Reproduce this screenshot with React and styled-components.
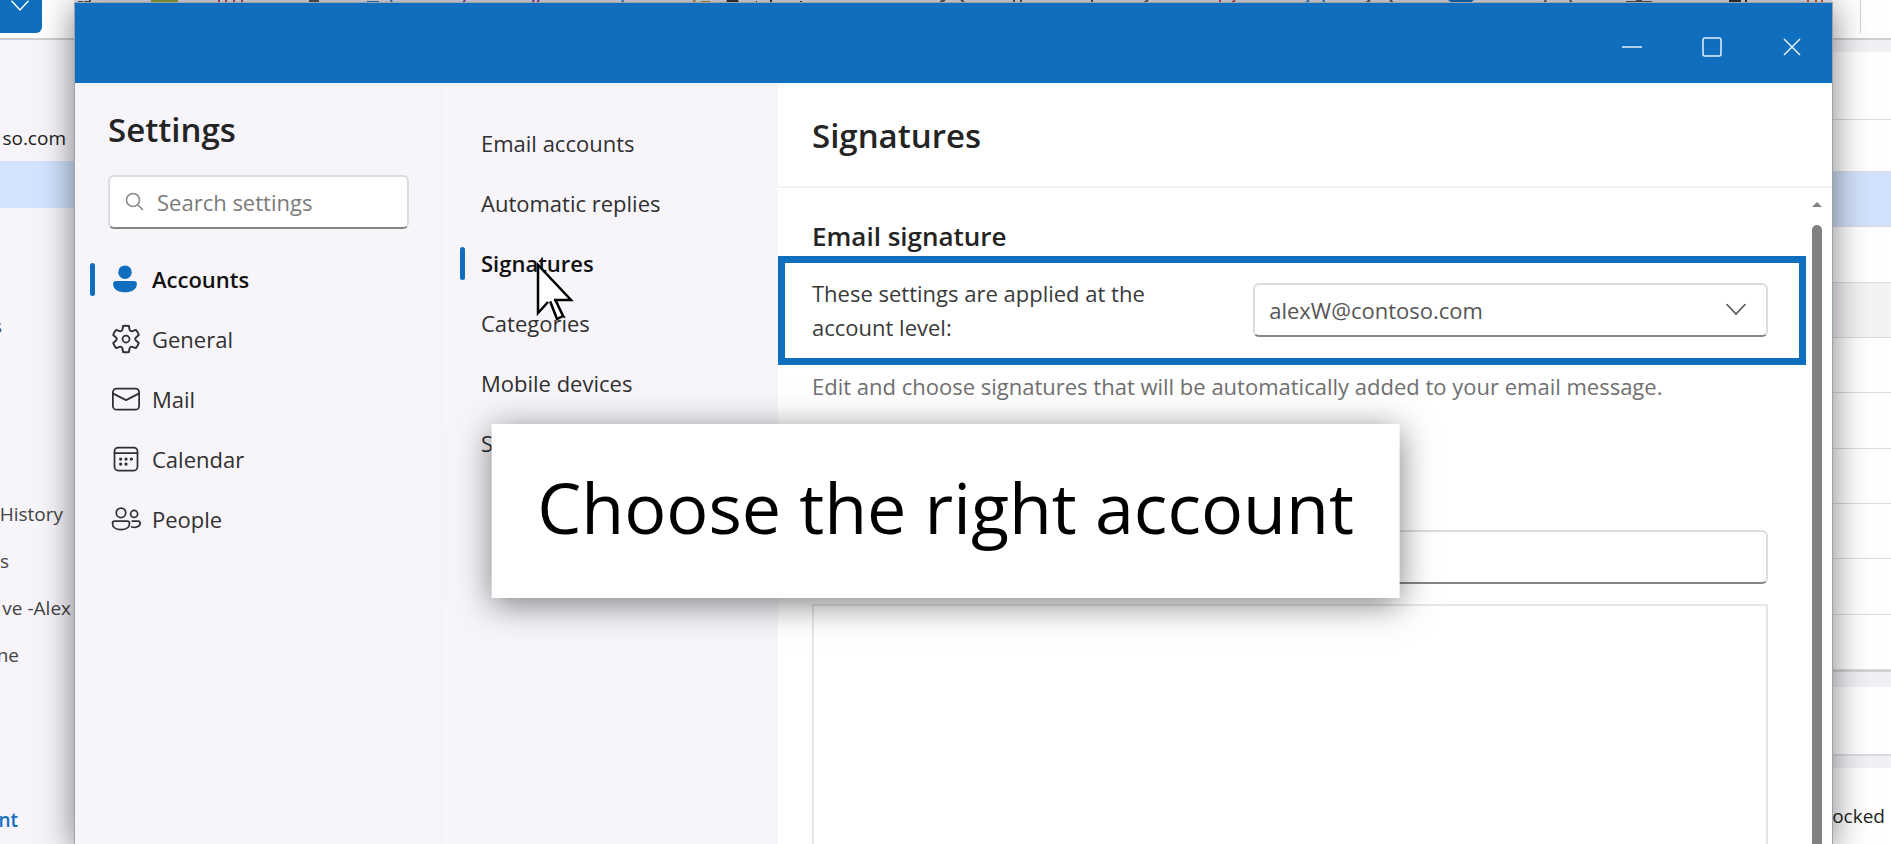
import React from 'react';
import styled, { createGlobalStyle, css } from 'styled-components';

const blue = '#106ebe';
const panel = '#f7f5fa';

const GlobalStyle = createGlobalStyle`
  * {
    box-sizing: border-box;
  }
  body {
    margin: 0;
    overflow: hidden;
    background: #fff;
    color: #242424;
    font-family: 'Open Sans', 'Noto Sans', sans-serif;
    font-size: 22px;
  }
  button, input, select, textarea {
    font: inherit;
    color: inherit;
  }
  ul {
    list-style: none;
    margin: 0;
    padding: 0;
  }
`;

const Screen = styled.div`
  position: relative;
  height: 100vh;
  overflow: hidden;
`;

/* mail window behind the dialog */

const Backdrop = styled.div`
  position: absolute;
  inset: 0;
  display: flex;
  flex-direction: column;
  font-size: 19px;
`;

const Ribbon = styled.div`
  display: flex;
  justify-content: space-between;
  height: 40px;
  flex: none;
  border-bottom: 2px solid #cfcdd1;
`;

const RibbonButton = styled.button`
  display: flex;
  justify-content: flex-end;
  width: 42px;
  height: 33px;
  padding: 0 13px 0 0;
  border: 0;
  border-radius: 0 0 6px 0;
  background: ${blue};
  color: #fff;
`;

const RibbonIcons = styled.svg`
  flex: 1;
  height: 3px;
  margin-left: 32px;
  background: #e6e9f4;
`;

const RibbonEnd = styled.div`
  width: 31px;
  height: 33px;
  margin-left: 28px;
  border-left: 1px solid #d0d0d0;
`;

const BackdropBody = styled.div`
  flex: 1;
  display: flex;
  justify-content: space-between;
`;

const Folders = styled.ul`
  width: 90px;
  padding-top: 74px;
  background: ${panel};
`;

const Folder = styled.li`
  display: flex;
  align-items: center;
  justify-content: flex-end;
  height: 47px;
  padding-right: ${({ $end }) => $end || 0}px;
  line-height: 26px;
  white-space: nowrap;
  color: ${({ $account }) => ($account ? '#222' : '#444')};
  background: ${({ $selected }) => ($selected ? '#d2e4ff' : 'none')};
`;

const AddAccount = styled(Folder)`
  margin-top: 118px;
  font-weight: 600;
  color: ${blue};
`;

const MessageColumn = styled.div`
  display: flex;
  flex-direction: column;
  width: 90px;
  padding-top: 12px;
  background: #f2f0f4;
`;

const Messages = styled.ul`
  display: grid;
  grid-template-rows: 68px 52px repeat(9, 1fr);
  flex: none;
  height: 620px;
  background: #fff;
  border-bottom: 2px solid #d3d0d4;
`;

const Message = styled.li`
  border-bottom: 1px solid #dcdadd;
  background: ${({ $tone }) => $tone || '#fff'};
`;

const ReplyCard = styled.div`
  height: 69px;
  margin: 15px 0 12px;
  background: #fff;
  border-bottom: 2px solid #dcdadf;
`;

const Notice = styled.div`
  flex: 1;
  display: flex;
  justify-content: flex-end;
  padding: 35px 6px 0 0;
  line-height: 26px;
  background: #fff;
`;

/* settings dialog */

const Dialog = styled.main`
  position: relative;
  display: flex;
  flex-direction: column;
  height: 100%;
  margin: 2px 58px 0 74px;
  border: 1px solid #9da3ab;
  border-bottom: 0;
  background: #fff;
  box-shadow: 0 4px 32px rgba(0, 0, 0, 0.5);
`;

const TitleBar = styled.header`
  display: flex;
  justify-content: flex-end;
  flex: none;
  height: 80px;
  background: ${blue};
`;

const WindowButton = styled.button`
  display: flex;
  align-items: center;
  justify-content: center;
  width: 80px;
  padding: 8px 0 0;
  border: 0;
  background: none;
  color: #e4f0fa;
`;

const Columns = styled.div`
  flex: 1;
  display: grid;
  grid-template-columns: 366px 337px 1fr;
  min-height: 0;
`;

const Nav = styled.nav`
  padding: 25px 32px 0 15px;
  background: ${panel};
`;

const SubNav = styled.nav`
  padding: 30px 0 0 18px;
  background: ${panel};
  border-left: 1px solid #f2f0f5;
`;

const heading = css`
  margin: 0;
  font-size: 33px;
  font-weight: 600;
  line-height: 44px;
`;

const NavTitle = styled.h1`
  ${heading}
  padding-left: 18px;
`;

const field = css`
  height: 54px;
  border: 2px solid #dddbde;
  border-bottom-color: #858585;
  border-radius: 6px;
  background: #fff;
`;

const Search = styled.label`
  ${field}
  display: flex;
  align-items: center;
  gap: 12px;
  margin: 23px 0 20px 18px;
  padding: 0 15px;
  color: #8a8a8a;
`;

const SearchInput = styled.input`
  flex: 1;
  min-width: 0;
  padding: 0;
  border: 0;
  background: none;
  outline: 0;

  &::placeholder {
    color: #7b7b7b;
    opacity: 1;
  }
`;

const NavItem = styled.li`
  position: relative;
  height: 60px;
`;

const NavLink = styled.a`
  display: flex;
  align-items: center;
  height: 100%;
  color: ${({ $active }) => ($active ? '#111' : '#303030')};
  font-weight: ${({ $active }) => ($active ? 600 : 400)};
  text-decoration: none;

  &::before {
    content: '';
    width: 5px;
    height: 33px;
    margin-right: 16px;
    border-radius: 3px;
    background: ${({ $active }) => ($active ? blue : 'transparent')};
  }

  svg {
    margin-right: 11px;
  }
`;

const Pointer = styled.svg`
  position: absolute;
  z-index: 1;
  top: 29px;
  left: 76px;
`;

const Pane = styled.section`
  display: flex;
  flex-direction: column;
  min-width: 0;
`;

const PaneHeader = styled.header`
  flex: none;
  height: 105px;
  padding: 31px 34px 0;
  border-bottom: 2px solid #f3f2f5;
`;

const PaneTitle = styled.h2`
  ${heading}
`;

const PaneBody = styled.div`
  flex: 1;
  display: flex;
  min-height: 0;
`;

const Form = styled.form`
  flex: 1;
  display: flex;
  flex-direction: column;
  min-width: 0;
  padding-top: 30px;
`;

const SectionTitle = styled.h3`
  margin: 0 0 2px;
  padding: 0 34px;
  font-size: 26px;
  font-weight: 600;
  line-height: 36px;
`;

const AccountRow = styled.div`
  display: grid;
  grid-template-columns: 6fr 7fr;
  align-items: center;
  flex: none;
  height: 109px;
  padding: 0 31px 2px 27px;
  border: 7px solid ${blue};
`;

const AccountLabel = styled.label`
  max-width: 360px;
  line-height: 34px;
  color: #3a3a3a;
`;

const SelectBox = styled.div`
  position: relative;
  color: #555;

  svg {
    position: absolute;
    top: 20px;
    right: 22px;
    pointer-events: none;
  }
`;

const Select = styled.select`
  ${field}
  appearance: none;
  width: 100%;
  padding: 0 14px;
`;

const Hint = styled.p`
  margin: 6px 0 0;
  padding: 0 34px;
  line-height: 30px;
  white-space: nowrap;
  color: #707070;
`;

const NameInput = styled.input`
  ${field}
  flex: none;
  margin: 129px 38px 20px 34px;
  padding: 0 14px;
`;

const Editor = styled.textarea`
  flex: 1;
  margin: 0 38px 0 34px;
  padding: 14px;
  border: 2px solid #e6e5e8;
  border-bottom: 0;
  resize: none;
`;

const Scrollbar = styled.div`
  display: flex;
  flex-direction: column;
  align-items: center;
  width: 26px;
  padding: 13px 4px 0 0;
`;

const Thumb = styled.div`
  flex: 1;
  width: 10px;
  margin-top: 17px;
  border-radius: 5px 5px 0 0;
  background: #828182;
`;

const Callout = styled.div`
  position: absolute;
  top: 424px;
  left: 50%;
  padding: 33px 46px 41px;
  transform: translateX(-50%);
  background: #fff;
  color: #000;
  font-size: 70px;
  line-height: 100px;
  white-space: nowrap;
  box-shadow: 0 6px 32px rgba(0, 0, 0, 0.5);
`;

const Icon = ({ size = 30, children }) => (
  <svg
    width={size}
    height={size}
    viewBox="0 0 24 24"
    fill="none"
    stroke="currentColor"
    strokeWidth="1.4"
    strokeLinecap="round"
    strokeLinejoin="round"
    aria-hidden="true"
  >
    {children}
  </svg>
);

const icons = {
  accounts: (
    <Icon>
      <g fill={blue} stroke="none">
        <circle cx="11.2" cy="6.5" r="5.4" />
        <path d="M4 13.6h14.4a2.3 2.3 0 0 1 2.3 2.3c0 4.4-4.3 6.7-9.5 6.7s-9.500-2.300-9.500-6.700A2.3 2.3 0 0 1 4 13.6z" />
      </g>
    </Icon>
  ),
  general: (
    <Icon>
      <circle cx="12" cy="12" r="2.8" />
      <path
        d="M9.9 1.3q2.1-.5 4.2 0l.5 2.6c.2.9 1.1 1.4 2 1.1l2.5-.9q1.5 1.6 2.1 3.6l-2 1.8c-.7.6-.7 1.6 0 2.2l2 1.8q-.6 2.1-2.1 3.7l-2.5-.9c-.9-.3-1.8.2-2 1.1l-.5 2.6q-2.1.5-4.2 0l-.5-2.6c-.2-.9-1.1-1.4-2-1.1l-2.5.9q-1.5-1.6-2.1-3.7l2-1.8c.7-.6.7-1.6 0-2.2l-2-1.800q.6-2 2.1-3.6l2.5.9c.9.3 1.8-.2 2-1.1z"
        transform="translate(-1.32 .18) scale(1.11)"
      />
    </Icon>
  ),
  mail: (
    <Icon>
      <rect x="1.5" y="3.7" width="21" height="16.8" rx="3" />
      <path d="M1.800 7.700 12 12.900l10.200-5.200" />
    </Icon>
  ),
  calendar: (
    <Icon>
      <rect x="2.8" y="2.8" width="18.4" height="18.4" rx="3" />
      <path d="M2.8 7.2h18.4" />
      <path d="M7.7 12h.01M12 12h.01M16.3 12h.01M7.7 16h.01M12 16h.01" strokeWidth="2.6" />
    </Icon>
  ),
  people: (
    <Icon>
      <circle cx="8" cy="7" r="3.8" />
      <circle cx="18.5" cy="8" r="2.8" />
      <path d="M3 13.7h10a1.8 1.8 0 0 1 1.8 1.8c0 3.4-3.2 5-6.8 5s-6.8-1.6-6.8-5A1.8 1.8 0 0 1 3 13.7z" />
      <path d="M17 13.7h4.6a1.800 1.8 0 0 1 1.8 1.7c0 2.6-3.6 4-6.8 3" />
    </Icon>
  ),
};

const Chevron = ({ width = 20 }) => (
  <svg width={width} height={width * 0.65} viewBox="0 0 20 13" fill="none" aria-hidden="true">
    <path d="M1 1.5l9 9.5 9-9.5" stroke="currentColor" strokeWidth="1.6" strokeLinecap="round" />
  </svg>
);

const folders = [
  { label: 'so.com', end: 24, account: true },
  { selected: true },
  {},
  {},
  { label: 's', end: 88 },
  {},
  {},
  {},
  { label: 'History', end: 27 },
  { label: 's', end: 81 },
  { label: 've -Alex', end: 19 },
  { label: 'ne', end: 71 },
];

const messages = [null, null, '#d2e2fc', null, '#f4f2f5', null, null, null, null, null, null];

const sections = [
  { id: 'accounts', label: 'Accounts', active: true },
  { id: 'general', label: 'General' },
  { id: 'mail', label: 'Mail' },
  { id: 'calendar', label: 'Calendar' },
  { id: 'people', label: 'People' },
];

const pages = ['Email accounts', 'Automatic replies', 'Signatures', 'Categories', 'Mobile devices', 'Storage'];

export default () => (
  <Screen>
    <GlobalStyle />
    <Backdrop>
      <Ribbon>
        <RibbonButton aria-label="New mail options">
          <Chevron width={18} />
        </RibbonButton>
        <RibbonIcons viewBox="0 0 1758 3" preserveAspectRatio="none" fill="none" strokeWidth="2" aria-hidden="true">
          <path
            d="M4 2h5M16 0v2h-6M235 1h10M866 2l5-2M890 2l-3-2M940 0v3M947 0v3M1018 0v3M1074 0l-4 3M1296 0l-4 3M1316 0l3 3M1472 0l-2 3M1496 0l2 3M1552 2h26M1562 0h6"
            stroke="#555"
          />
          <path d="M77 0h27v3h-27z" fill="#8fa83a" />
          <path d="M145 0v3M152 0v3M160 0v3M168 0v3M1146 0v3M1161 0l-3 3" stroke="#b8434f" />
          <path d="M293 2h12M317 0l1 3M548 0l2 3M1235 0l-3 3M1249 0l2 3" stroke="#2b7fc4" />
          <path d="M391 0l-2 3M460 0l-2 3M465 0l-2 3" stroke="#8c3a9c" />
          <path d="M619 3l2-3M627 2h9" stroke="#b98c20" />
          <path d="M653 3l1-3M664 3l-1-3M654 1h9M682 2h1M697 0v3M727 1v2M1655 1h12M1672 0v3" stroke="#333" />
          <path d="M1374 0h26l-4 3h-18z" fill={blue} />
          <path d="M1734 0v3M1742 0v3M1748 0v3" stroke="#cf5b35" />
        </RibbonIcons>
        <RibbonEnd />
      </Ribbon>
      <BackdropBody>
        <Folders>
          {folders.map(({ label, end, selected, account }, i) => (
            <Folder key={i} $end={end} $selected={selected} $account={account}>
              {label}
            </Folder>
          ))}
          <AddAccount $end={72}>nt</AddAccount>
        </Folders>
        <MessageColumn>
          <Messages>
            {messages.map((tone, i) => (
              <Message key={i} $tone={tone} />
            ))}
          </Messages>
          <ReplyCard />
          <Notice>ocked</Notice>
        </MessageColumn>
      </BackdropBody>
    </Backdrop>

    <Dialog>
      <TitleBar>
        <WindowButton aria-label="Minimize">
          <svg width="20" height="20" stroke="currentColor" strokeWidth="1.5">
            <path d="M0 10h20" />
          </svg>
        </WindowButton>
        <WindowButton aria-label="Maximize">
          <svg width="20" height="20" fill="none" stroke="currentColor" strokeWidth="1.5">
            <rect x="1" y="1" width="18" height="18" rx="2" />
          </svg>
        </WindowButton>
        <WindowButton aria-label="Close">
          <svg width="18" height="18" stroke="currentColor" strokeWidth="1.5">
            <path d="M1 1l16 16M17 1L1 17" />
          </svg>
        </WindowButton>
      </TitleBar>
      <Columns>
        <Nav aria-label="Settings">
          <NavTitle>Settings</NavTitle>
          <Search>
            <svg
              width="20"
              height="20"
              viewBox="0 0 20 20"
              fill="none"
              stroke="currentColor"
              strokeWidth="1.6"
              aria-hidden="true"
            >
              <circle cx="8" cy="8" r="6.5" />
              <path d="M13 13l5 5" />
            </svg>
            <SearchInput type="search" placeholder="Search settings" aria-label="Search settings" />
          </Search>
          <ul>
            {sections.map(({ id, label, active }) => (
              <NavItem key={id}>
                <NavLink href={`#${id}`} $active={active}>
                  {icons[id]}
                  {label}
                </NavLink>
              </NavItem>
            ))}
          </ul>
        </Nav>
        <SubNav aria-label="Accounts">
          <ul>
            {pages.map(label => (
              <NavItem key={label}>
                <NavLink href={`#${label}`} $active={label === 'Signatures'}>
                  {label}
                </NavLink>
                {label === 'Signatures' && (
                  <Pointer width="40" height="62" viewBox="0 0 40 62" fill="#fff" stroke="#000" strokeWidth="2.5">
                    <path d="M2 3v48l11-11 9 17 6-3-8-16h15z" stroke="none" />
                    <path d="M14 39l7 18 6-3-8-17" />
                    <path d="M12 40L2 51V3l33 35H18" />
                  </Pointer>
                )}
              </NavItem>
            ))}
          </ul>
        </SubNav>
        <Pane>
          <PaneHeader>
            <PaneTitle>Signatures</PaneTitle>
          </PaneHeader>
          <PaneBody>
            <Form>
              <SectionTitle>Email signature</SectionTitle>
              <AccountRow>
                <AccountLabel htmlFor="account">These settings are applied at the account level:</AccountLabel>
                <SelectBox>
                  <Select id="account">
                    <option>alexW@contoso.com</option>
                  </Select>
                  <Chevron />
                </SelectBox>
              </AccountRow>
              <Hint>Edit and choose signatures that will be automatically added to your email message.</Hint>
              <NameInput aria-label="Signature name" />
              <Editor aria-label="Signature" />
            </Form>
            <Scrollbar aria-hidden="true">
              <svg width="10" height="7" fill="#828182">
                <path d="M5 1l5 5H0z" />
              </svg>
              <Thumb />
            </Scrollbar>
          </PaneBody>
        </Pane>
      </Columns>
    </Dialog>
    <Callout>Choose the right account</Callout>
  </Screen>
);
